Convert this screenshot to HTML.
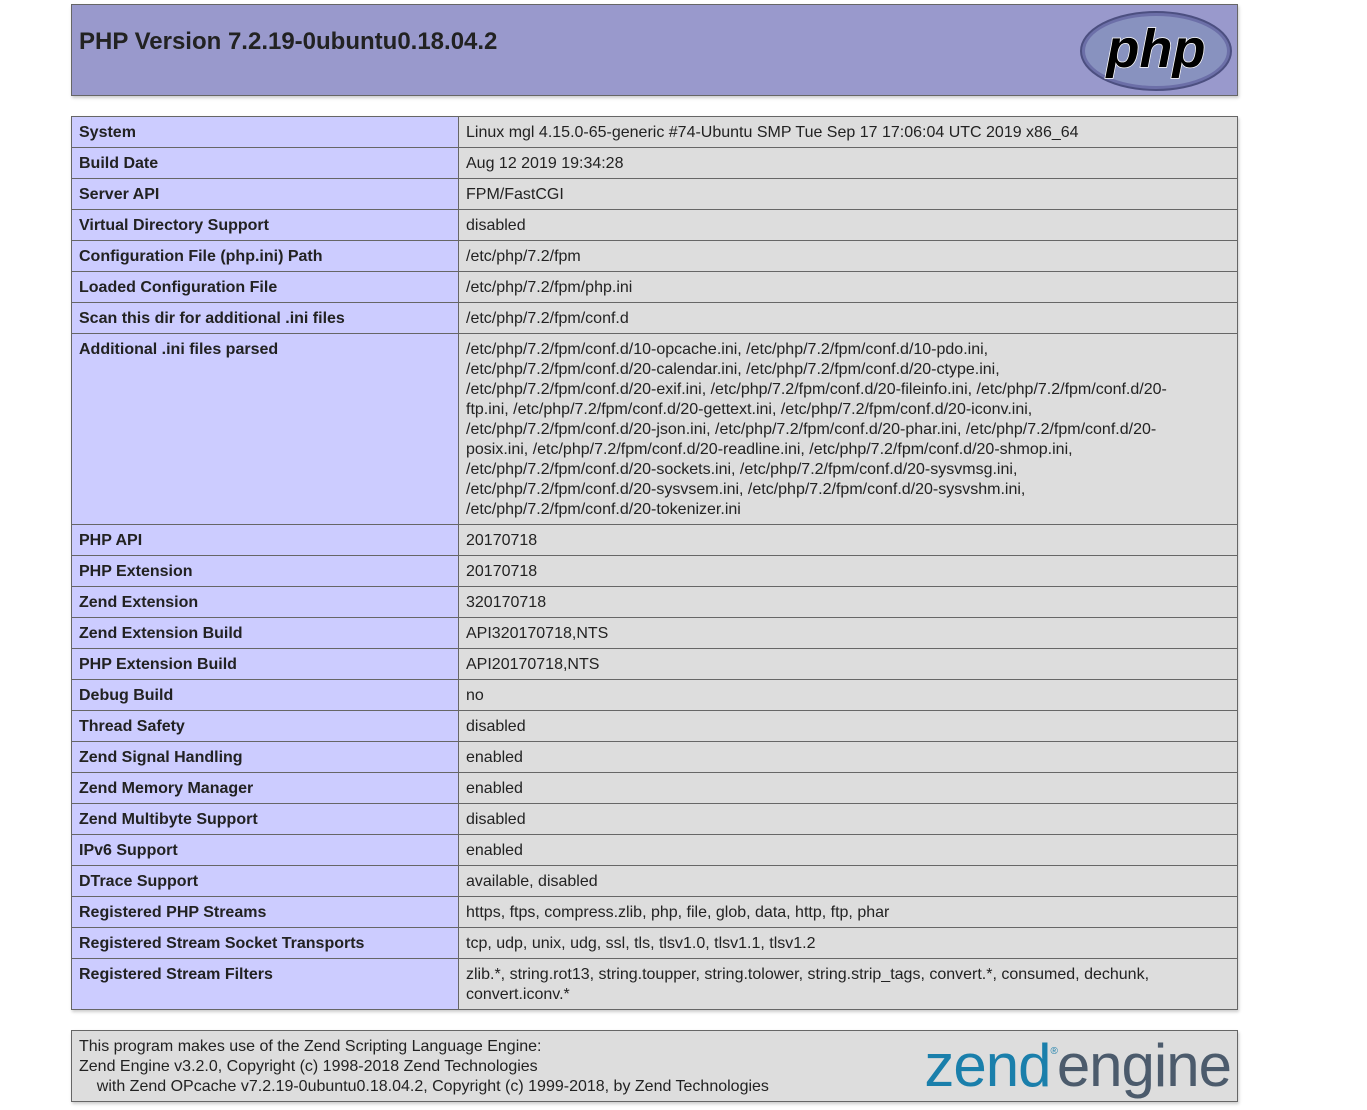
<!DOCTYPE html>
<html><head><meta charset="utf-8"><style>
body{margin:0;background:#fff;font-family:"Liberation Sans",sans-serif;font-size:16px;color:#222}
.box{position:absolute;left:71px;width:1165px;border:1px solid #666;box-shadow:1px 2px 3px #ccc}
.hdr{top:4px;height:90px;background:#99c}
.hdr h1{margin:0;position:absolute;left:7px;top:23px;font-size:24px;font-weight:bold;color:#222}
table{position:absolute;left:71px;top:116px;width:1167px;border-collapse:collapse;box-shadow:1px 2px 3px #ccc}
td{border:1px solid #666;padding:6px 7px 4px;line-height:20px;vertical-align:top;white-space:nowrap}
td.e{background:#ccf;font-weight:bold;width:372px}
td.v{background:#ddd}
.ftr{top:1030px;height:70px;background:#ddd;line-height:20px;overflow:hidden}
</style></head><body>
<div class="box hdr"><h1>PHP Version 7.2.19-0ubuntu0.18.04.2</h1>
<svg style="position:absolute;left:1008px;top:6px" width="152" height="80" viewBox="0 0 152 80"><ellipse cx="76" cy="40" rx="75" ry="39" fill="#6c6fa8" stroke="#4c4f80" stroke-width="2"/><ellipse cx="76" cy="40" rx="71" ry="35" fill="#8892bf"/><text x="76" y="56" text-anchor="middle" font-family="Liberation Sans" font-weight="bold" font-style="italic" font-size="54" fill="#000" stroke="#fff" stroke-width="1.5" paint-order="stroke">php</text></svg>
</div>
<table>
<tr><td class="e">System</td><td class="v">Linux mgl 4.15.0-65-generic #74-Ubuntu SMP Tue Sep 17 17:06:04 UTC 2019 x86_64</td></tr>
<tr><td class="e">Build Date</td><td class="v">Aug 12 2019 19:34:28</td></tr>
<tr><td class="e">Server API</td><td class="v">FPM/FastCGI</td></tr>
<tr><td class="e">Virtual Directory Support</td><td class="v">disabled</td></tr>
<tr><td class="e">Configuration File (php.ini) Path</td><td class="v">/etc/php/7.2/fpm</td></tr>
<tr><td class="e">Loaded Configuration File</td><td class="v">/etc/php/7.2/fpm/php.ini</td></tr>
<tr><td class="e">Scan this dir for additional .ini files</td><td class="v">/etc/php/7.2/fpm/conf.d</td></tr>
<tr><td class="e">Additional .ini files parsed</td><td class="v">/etc/php/7.2/fpm/conf.d/10-opcache.ini, /etc/php/7.2/fpm/conf.d/10-pdo.ini,<br>/etc/php/7.2/fpm/conf.d/20-calendar.ini, /etc/php/7.2/fpm/conf.d/20-ctype.ini,<br>/etc/php/7.2/fpm/conf.d/20-exif.ini, /etc/php/7.2/fpm/conf.d/20-fileinfo.ini, /etc/php/7.2/fpm/conf.d/20-<br>ftp.ini, /etc/php/7.2/fpm/conf.d/20-gettext.ini, /etc/php/7.2/fpm/conf.d/20-iconv.ini,<br>/etc/php/7.2/fpm/conf.d/20-json.ini, /etc/php/7.2/fpm/conf.d/20-phar.ini, /etc/php/7.2/fpm/conf.d/20-<br>posix.ini, /etc/php/7.2/fpm/conf.d/20-readline.ini, /etc/php/7.2/fpm/conf.d/20-shmop.ini,<br>/etc/php/7.2/fpm/conf.d/20-sockets.ini, /etc/php/7.2/fpm/conf.d/20-sysvmsg.ini,<br>/etc/php/7.2/fpm/conf.d/20-sysvsem.ini, /etc/php/7.2/fpm/conf.d/20-sysvshm.ini,<br>/etc/php/7.2/fpm/conf.d/20-tokenizer.ini</td></tr>
<tr><td class="e">PHP API</td><td class="v">20170718</td></tr>
<tr><td class="e">PHP Extension</td><td class="v">20170718</td></tr>
<tr><td class="e">Zend Extension</td><td class="v">320170718</td></tr>
<tr><td class="e">Zend Extension Build</td><td class="v">API320170718,NTS</td></tr>
<tr><td class="e">PHP Extension Build</td><td class="v">API20170718,NTS</td></tr>
<tr><td class="e">Debug Build</td><td class="v">no</td></tr>
<tr><td class="e">Thread Safety</td><td class="v">disabled</td></tr>
<tr><td class="e">Zend Signal Handling</td><td class="v">enabled</td></tr>
<tr><td class="e">Zend Memory Manager</td><td class="v">enabled</td></tr>
<tr><td class="e">Zend Multibyte Support</td><td class="v">disabled</td></tr>
<tr><td class="e">IPv6 Support</td><td class="v">enabled</td></tr>
<tr><td class="e">DTrace Support</td><td class="v">available, disabled</td></tr>
<tr><td class="e">Registered PHP Streams</td><td class="v">https, ftps, compress.zlib, php, file, glob, data, http, ftp, phar</td></tr>
<tr><td class="e">Registered Stream Socket Transports</td><td class="v">tcp, udp, unix, udg, ssl, tls, tlsv1.0, tlsv1.1, tlsv1.2</td></tr>
<tr><td class="e">Registered Stream Filters</td><td class="v">zlib.*, string.rot13, string.toupper, string.tolower, string.strip_tags, convert.*, consumed, dechunk,<br>convert.iconv.*</td></tr>
</table>
<div class="box ftr"><div style="position:absolute;left:7px;top:6px;white-space:nowrap">This program makes use of the Zend Scripting Language Engine:<br>Zend&nbsp;Engine&nbsp;v3.2.0, Copyright (c) 1998-2018 Zend Technologies<br>&nbsp;&nbsp;&nbsp;&nbsp;with Zend OPcache v7.2.19-0ubuntu0.18.04.2, Copyright (c) 1999-2018, by Zend Technologies</div>
<div style="position:absolute;right:6px;top:-14px;font-size:60px;line-height:70px;white-space:nowrap;letter-spacing:-1px"><span style="color:#1a7fab">zend</span><sup style="font-size:10px;color:#1a7fab;vertical-align:32px">®</sup><span style="color:#4c5b6c">engine</span></div></div>
</body></html>
